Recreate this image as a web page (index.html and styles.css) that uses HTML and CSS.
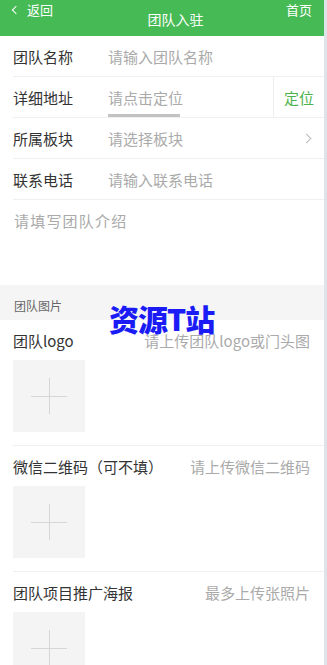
FILE: index.html
```html
<!DOCTYPE html>
<html lang="zh">
<head>
<meta charset="utf-8">
<title>团队入驻</title>
<link rel="stylesheet" href="styles.css">
</head>
<body>
<div class="page">
  <header class="topbar">
    <div class="back"><span class="back-arrow"></span>返回</div>
    <div class="title">团队入驻</div>
    <div class="home">首页</div>
  </header>

  <div class="row">
    <span class="label">团队名称</span>
    <span class="ph">请输入团队名称</span>
  </div>
  <div class="row row-addr">
    <div class="addr-main">
      <span class="label">详细地址</span>
      <span class="ph ph-addr">请点击定位<span class="addr-bar"></span></span>
    </div>
    <div class="locate">定位</div>
  </div>
  <div class="row">
    <span class="label">所属板块</span>
    <span class="ph">请选择板块</span>
    <span class="chev"></span>
  </div>
  <div class="row">
    <span class="label">联系电话</span>
    <span class="ph">请输入联系电话</span>
  </div>

  <div class="intro">请填写团队介绍</div>

  <div class="section">团队图片</div>

  <div class="upload">
    <div class="up-head">
      <span class="label">团队logo</span>
      <span class="up-hint">请上传团队logo或门头图</span>
    </div>
    <div class="up-box"></div>
  </div>
  <div class="upload">
    <div class="up-head">
      <span class="label">微信二维码（可不填）</span>
      <span class="up-hint">请上传微信二维码</span>
    </div>
    <div class="up-box"></div>
  </div>
  <div class="upload">
    <div class="up-head">
      <span class="label">团队项目推广海报</span>
      <span class="up-hint">最多上传张照片</span>
    </div>
    <div class="up-box"></div>
  </div>

  <div class="watermark">资源T站</div>
</div>
</body>
</html>
```

FILE: styles.css
```css
html {
  background: #dfe4eb;
  height: 100%;
}
body {
  margin: 0;
  font-family: "Noto Sans CJK SC", "Noto Sans", sans-serif;
  color: #333;
}
.page {
  position: relative;
  width: 324px;
  height: 665px;
  background: #fff;
  overflow: hidden;
}
.topbar {
  height: 36px;
  background: #46bb55;
  color: #fff;
  display: flex;
  justify-content: space-between;
  align-items: flex-start;
  padding: 0 13px 0 13px;
  box-sizing: border-box;
}
.back {
  font-size: 13px;
  line-height: 20px;
  display: flex;
  align-items: center;
}
.back-arrow {
  width: 5px;
  height: 5px;
  border-left: 1px solid #fff;
  border-bottom: 1px solid #fff;
  transform: rotate(45deg);
  margin-right: 8px;
  margin-top: -1px;
}
.title {
  font-size: 14px;
  line-height: 20px;
  margin-top: 9px;
  margin-left: 12px;
}
.home {
  font-size: 13px;
  line-height: 20px;
  margin-right: -1px;
}
.row {
  height: 40px;
  margin-left: 13px;
  border-bottom: 1px solid #f0f0f0;
  display: flex;
  align-items: center;
  font-size: 15px;
  position: relative;
}
.label {
  color: #333;
  font-size: 15px;
  white-space: nowrap;
}
.row .label {
  width: 95px;
  flex: none;
}
.ph {
  color: #aaa;
  font-size: 15px;
}
.row-addr {
  align-items: stretch;
}
.addr-main {
  flex: 1;
  display: flex;
  align-items: center;
}
.ph-addr {
  position: relative;
  display: inline-block;
}
.addr-bar {
  position: absolute;
  left: 0;
  top: 27px;
  width: 72px;
  height: 3px;
  background: #c2c2c2;
}
.locate {
  width: 50px;
  border-left: 1px solid #eee;
  color: #4cb34c;
  font-size: 15px;
  display: flex;
  align-items: center;
  justify-content: center;
}
.chev {
  position: absolute;
  right: 14px;
  top: 17px;
  width: 6px;
  height: 6px;
  border-top: 1px solid #bbb;
  border-right: 1px solid #bbb;
  transform: rotate(45deg);
}
.intro {
  height: 85px;
  box-sizing: border-box;
  padding: 10px 14px 0;
  font-size: 15px;
  letter-spacing: 1.2px;
  color: #aaa;
  line-height: 22px;
}
.section {
  height: 35px;
  background: #f5f5f5;
  font-size: 12px;
  color: #666;
  padding-left: 14px;
  line-height: 42px;
  box-sizing: border-box;
}
.upload {
  margin-left: 13px;
  border-bottom: 1px solid #f0f0f0;
  padding-bottom: 13px;
}
.up-head {
  display: flex;
  justify-content: space-between;
  align-items: center;
  height: 40px;
  padding-right: 14px;
}
.up-hint {
  color: #aaa;
  font-size: 15px;
}
.up-box {
  width: 72px;
  height: 72px;
  background: #f4f4f4;
  position: relative;
}
.up-box::before,
.up-box::after {
  content: "";
  position: absolute;
  background: #d6d6d6;
}
.up-box::before {
  left: 18px;
  top: 36px;
  width: 36px;
  height: 1px;
}
.up-box::after {
  left: 36px;
  top: 18px;
  width: 1px;
  height: 36px;
}
.watermark {
  position: absolute;
  left: 109px;
  top: 300px;
  font-size: 30px;
  font-weight: 900;
  color: #1b1bf5;
  line-height: 36px;
  letter-spacing: -1px;
}
```
